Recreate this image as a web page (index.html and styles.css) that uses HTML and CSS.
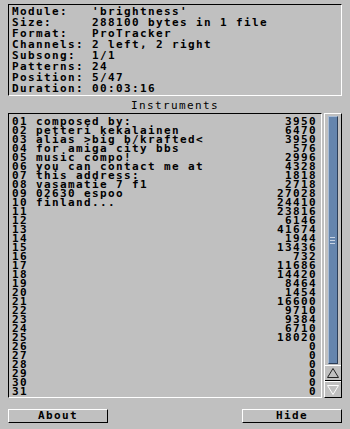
FILE: index.html
```html
<!DOCTYPE html>
<html lang="en">
<head>
    <meta charset="UTF-8">
    <title>Module Info</title>
    <link rel="stylesheet" href="styles.css">
</head>
<body>
    <!-- Module info -->
    <div class="info">
        <div class="line">Module:   'brightness'</div>
        <div class="line">Size:     288100 bytes in 1 file</div>
        <div class="line">Format:   ProTracker</div>
        <div class="line">Channels: 2 left, 2 right</div>
        <div class="line">Subsong:  1/1</div>
        <div class="line">Patterns: 24</div>
        <div class="line">Position: 5/47</div>
        <div class="line">Duration: 00:03:16</div>
    </div>

    <div class="title">Instruments</div>

    <!-- Instrument list + scroller -->
    <div class="list-area">
        <div class="list" id="list"></div>
        <div class="scroller">
            <div class="track">
                <div class="thumb">
                    <svg width="6" height="7" viewBox="0 0 6 7">
                        <path d="M0 0.5H5M0 3.5H5M0 6.5H5" stroke="#c8d4e4" stroke-width="1"/>
                    </svg>
                </div>
            </div>
            <div class="arrow">
                <svg width="14" height="12" viewBox="0 0 14 12">
                    <polygon points="7,1.5 12.5,10.5 1.5,10.5" fill="none" stroke="#222" stroke-width="1"/>
                </svg>
            </div>
            <div class="arrow">
                <svg width="14" height="12" viewBox="0 0 14 12">
                    <polygon points="1.5,1.5 12.5,1.5 7,10.5" fill="none" stroke="#fff" stroke-width="1"/>
                </svg>
            </div>
        </div>
    </div>

    <div class="buttons">
        <button class="btn">About</button>
        <button class="btn">Hide</button>
    </div>

    <script>
        var instruments = [
            ['composed by:', 3950],
            ['petteri kekalainen', 6470],
            ['alias >big b/krafted<', 3950],
            ['for amiga city bbs', 576],
            ['music compo!', 2996],
            ['you can contact me at', 4328],
            ['this address:', 1818],
            ['vasamatie 7 f1', 2718],
            ['02630 espoo', 27028],
            ['finland...', 24410],
            ['', 23816], ['', 6146], ['', 41674], ['', 1944], ['', 13436],
            ['', 732], ['', 11686], ['', 14420], ['', 8464], ['', 1454],
            ['', 16600], ['', 9710], ['', 9384], ['', 6710], ['', 18020],
            ['', 0], ['', 0], ['', 0], ['', 0], ['', 0], ['', 0]
        ];

        var list = document.getElementById('list');
        instruments.forEach(function (ins, i) {
            var row = document.createElement('div');
            row.className = 'row';
            var num = String(i + 1).padStart(2, '0');
            row.innerHTML = '<span class="num">' + num + '</span>' +
                '<span class="name">' + ins[0].replace(/</g, '&lt;').replace(/>/g, '&gt;') + '</span>' +
                '<span class="size">' + ins[1] + '</span>';
            list.appendChild(row);
        });
    </script>
</body>
</html>
```

FILE: styles.css
```css
body {
    margin: 0;
    padding: 4px 8px 0 8px;
    background-color: #c0c0c0;
    color: #000000;
    font-family: "DejaVu Sans Mono", monospace;
    font-weight: bold;
    font-size: 11px;
    letter-spacing: 1.38px;
}

/* Sunken info box */
.info {
    height: 92px;
    box-sizing: border-box;
    border: 1px solid;
    border-color: #000000 #ffffff #ffffff #000000;
    padding: 1px 3px;
    line-height: 11px;
}

.info .line {
    white-space: pre;
}

.title {
    height: 17px;
    line-height: 17px;
    text-align: center;
    font-weight: normal;
    padding-top: 1px;
    box-sizing: border-box;
}

.list-area {
    display: flex;
    gap: 2px;
    height: 285px;
}

.list {
    flex: 1;
    box-sizing: border-box;
    border: 1px solid;
    border-color: #000000 #ffffff #ffffff #000000;
    padding: 3px 5px 0 3px;
    line-height: 9px;
    overflow: hidden;
}

.row {
    display: flex;
    white-space: pre;
}

.row .num {
    width: 24px;
}

.row .name {
    flex: 1;
}

.row .size {
    margin-right: -1px;
}

/* Scroll bar */
.scroller {
    width: 18px;
    box-sizing: border-box;
    border: 1px solid;
    border-color: #ffffff #000000 #000000 #ffffff;
    display: flex;
    flex-direction: column;
}

.track {
    flex: 1;
    padding: 2px 3px 1px 3px;
    display: flex;
}

.thumb {
    flex: 1;
    background-color: #6585ad;
    border: 1px solid;
    border-color: #a8bcd6 #2c3e58 #2c3e58 #a8bcd6;
    display: flex;
    align-items: center;
    justify-content: center;
}

.arrow {
    height: 16px;
    box-sizing: border-box;
    border-top: 1px solid #ffffff;
    border-bottom: 1px solid #000000;
    display: flex;
    align-items: center;
    justify-content: center;
}

.arrow:last-child {
    border-bottom: none;
}

/* Bottom buttons */
.buttons {
    display: flex;
    justify-content: space-between;
    margin-top: 11px;
}

.btn {
    width: 100px;
    height: 14px;
    padding: 0;
    background-color: #c0c0c0;
    border: 1px solid;
    border-color: #ffffff #000000 #000000 #ffffff;
    font-family: "DejaVu Sans Mono", monospace;
    font-weight: bold;
    font-size: 11px;
    letter-spacing: 1.38px;
    line-height: 12px;
    color: #000000;
}
```
